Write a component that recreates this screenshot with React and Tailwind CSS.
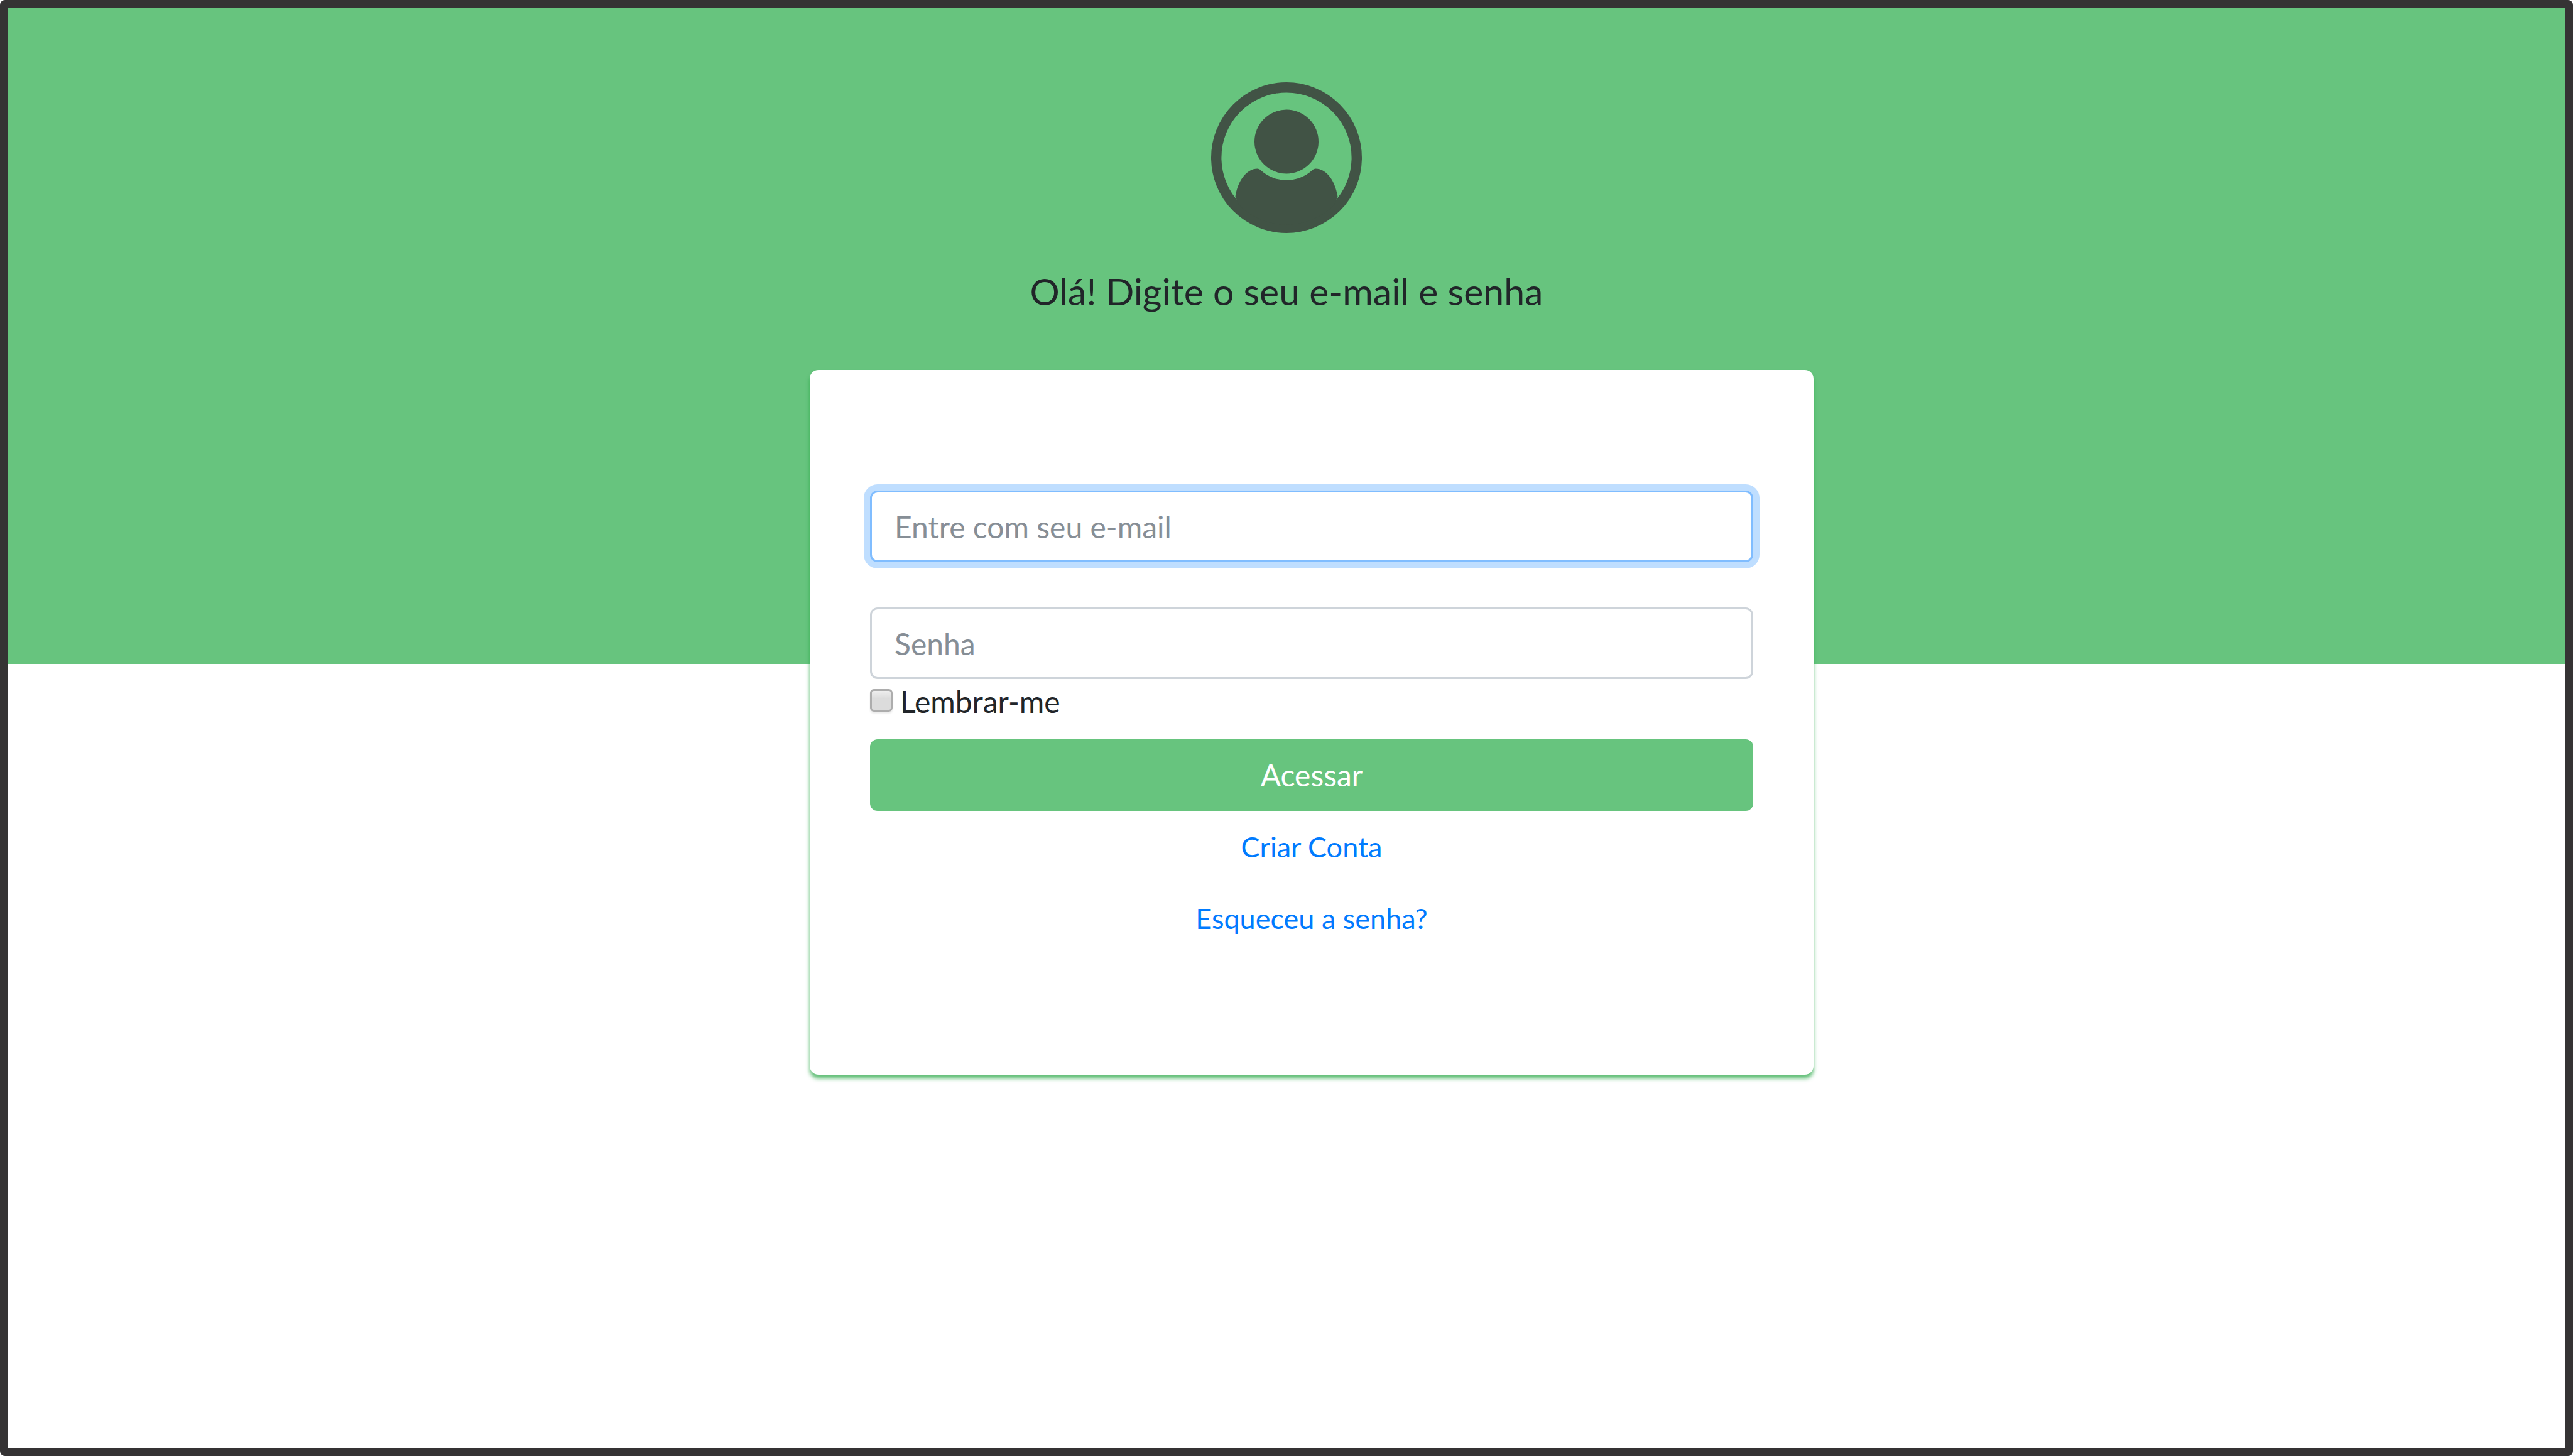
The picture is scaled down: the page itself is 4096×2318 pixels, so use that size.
import React from "react";

function UserBadge() {
  return (
    <svg viewBox="0 0 240 240" className="size-60 shrink-0 text-[#415345]" fill="currentColor" aria-hidden="true">
      <circle cx="120" cy="120" r="111.8" fill="none" stroke="currentColor" strokeWidth="16.4" />
      <circle cx="120" cy="94.5" r="51" />
      <path d="M38.5 182C43 155 57 137.500 74 137.500Q77 137.500 79 140A61 61 0 0 0 161 140Q163 137.500 166 137.500C183 137.500 197 155 201.500 182L196 195A107 107 0 0 1 44 195Z" />
    </svg>
  );
}

const fieldClass =
  "block h-[114px] w-full rounded-xl border-3 bg-white px-9 text-[48px] leading-[72px] text-[#495057] outline-none placeholder:text-[#868e96]";
const linkClass = "flex h-[114px] items-center justify-center text-[45px] leading-[72px] text-[#007bff]";

export default function App() {
  return (
    <div className="min-h-screen bg-white font-['Lato',sans-serif] text-[#212529]">
      <div className="min-h-screen rounded-lg border-13 border-[#353334] bg-white">
        <main className="flex h-[1044px] flex-col items-center bg-[#67c47e] pt-[118px]">
          <UserBadge />
          <h1 className="mt-12 text-[59px] leading-[90px]">Olá! Digite o seu e-mail e senha</h1>
          <div className="mt-20 flex w-full justify-center pl-20">
            <form
              className="w-full max-w-[1598px] rounded-[14px] bg-white px-24 py-48 shadow-[0_6px_6px_rgba(40,167,69,0.75)]"
              onSubmit={(event) => event.preventDefault()}
            >
              <input
                type="email"
                aria-label="E-mail"
                placeholder="Entre com seu e-mail"
                className={`${fieldClass} border-[#80bdff] shadow-[0_0_0_10px_#bfdeff]`}
              />
              <input
                type="password"
                aria-label="Senha"
                placeholder="Senha"
                className={`${fieldClass} mt-[72px] border-[#ced4da]`}
              />
              <div className="flex h-24 items-start">
                <input
                  id="remember"
                  type="checkbox"
                  className="mt-4 size-9 appearance-none rounded-md border-3 border-[#adadad] bg-linear-to-b from-[#eeeeee] to-[#dcdcdc] to-40% shadow-[0_3px_3px_rgba(0,0,0,0.08)]"
                />
                <label htmlFor="remember" className="pl-3 text-[48px] leading-[72px]">
                  Lembrar-me
                </label>
              </div>
              <button
                type="submit"
                className="block h-[114px] w-full rounded-xl bg-[#67c47e] text-[48px] leading-[72px] text-white"
              >
                Acessar
              </button>
              <a href="#criar-conta" className={linkClass}>
                Criar Conta
              </a>
              <a href="#esqueceu-senha" className={linkClass}>
                Esqueceu a senha?
              </a>
            </form>
          </div>
        </main>
      </div>
    </div>
  );
}
